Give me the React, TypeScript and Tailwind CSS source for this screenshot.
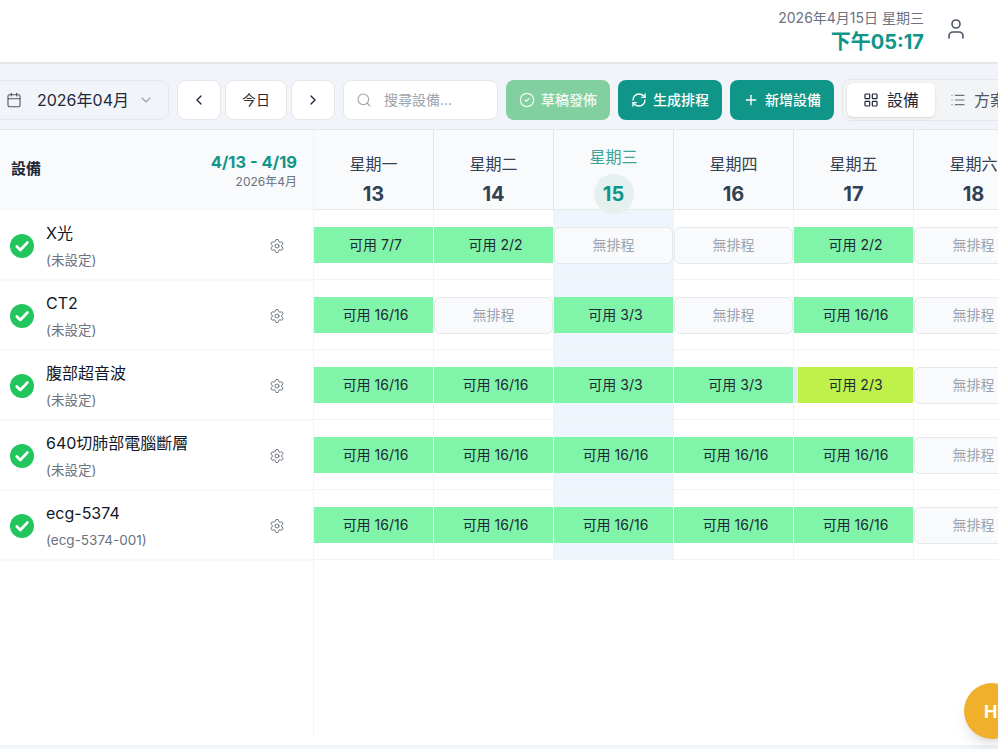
import { Calendar, ChevronDown, ChevronLeft, ChevronRight, CircleCheck, LayoutGrid, List, Plus, RefreshCw, Search, Settings, User } from "lucide-react";

type Cell = { label?: string; warn?: boolean };

const days = [
  { name: "星期一", num: 13 },
  { name: "星期二", num: 14 },
  { name: "星期三", num: 15, today: true },
  { name: "星期四", num: 16 },
  { name: "星期五", num: 17 },
  { name: "星期六", num: 18 },
  { name: "星期日", num: 19 },
];

const rows: { name: string; code: string; cells: Cell[] }[] = [
  {
    name: "X光",
    code: "(未設定)",
    cells: [{ label: "可用 7/7" }, { label: "可用 2/2" }, {}, {}, { label: "可用 2/2" }, {}, {}],
  },
  {
    name: "CT2",
    code: "(未設定)",
    cells: [{ label: "可用 16/16" }, {}, { label: "可用 3/3" }, {}, { label: "可用 16/16" }, {}, {}],
  },
  {
    name: "腹部超音波",
    code: "(未設定)",
    cells: [{ label: "可用 16/16" }, { label: "可用 16/16" }, { label: "可用 3/3" }, { label: "可用 3/3" }, { label: "可用 2/3", warn: true }, {}, {}],
  },
  {
    name: "640切肺部電腦斷層",
    code: "(未設定)",
    cells: [{ label: "可用 16/16" }, { label: "可用 16/16" }, { label: "可用 16/16" }, { label: "可用 16/16" }, { label: "可用 16/16" }, {}, {}],
  },
  {
    name: "ecg-5374",
    code: "(ecg-5374-001)",
    cells: [{ label: "可用 16/16" }, { label: "可用 16/16" }, { label: "可用 16/16" }, { label: "可用 16/16" }, { label: "可用 16/16" }, {}, {}],
  },
];

const StatusIcon = () => (
  <svg viewBox="0 0 24 24" className="w-6 h-6 shrink-0">
    <circle cx="12" cy="12" r="12" fill="#22c55e" />
    <path d="M6.8 12.5l3.5 3.5 7-7.4" fill="none" stroke="#fff" strokeWidth="2.8" strokeLinecap="round" strokeLinejoin="round" />
  </svg>
);

const ScheduleCell = ({ cell }: { cell: Cell }) => {
  if (!cell.label) {
    return (
      <div className="h-[37px] pb-0.5 rounded-md border border-[#e5e7eb] bg-[#f9fafb] flex items-center justify-center text-[14px] text-[#9ca3af]">
        無排程
      </div>
    );
  }
  if (cell.warn) {
    return (
      <div className="h-9 pb-0.5 border-l-4 border-[#e2e8f4] bg-[#bef24b] flex items-center justify-center text-[14px] text-[#1f2937]">
        {cell.label}
      </div>
    );
  }
  return (
    <div className="h-9 pb-0.5 pl-1 bg-[#80f4a8] flex items-center justify-center text-[14px] text-[#1f2937]">
      {cell.label}
    </div>
  );
};

const App = () => {
  return (
    <div className="relative w-[998px] h-[749px] overflow-hidden bg-white font-['Inter','Noto_Sans_CJK_TC',sans-serif]">
      {/* Top bar */}
      <header className="h-16 bg-white border-b-2 border-[#e5e7eb] flex items-center justify-end pr-[30px]">
        <div className="text-right mr-[20px] mt-px">
          <div className="text-[14px] leading-5 text-[#6b7280]">2026年4月15日 星期三</div>
          <div className="text-[20px] leading-7 font-bold text-[#0f9688]">下午05:17</div>
        </div>
        <User className="w-6 h-6 text-[#4b5563] -mt-1" strokeWidth={1.6} />
      </header>

      {/* Toolbar */}
      <div className="h-[66px] bg-[#f1f5f9] border-b border-[#e5e7eb] flex items-center gap-2 -ml-[30px] pt-1.5">
        <div className="w-[199px] h-10 shrink-0 rounded-lg border border-[#e5e7eb] bg-[#f1f5f9] flex items-center pl-[35px] text-[#374151]">
          <Calendar className="w-4 h-4 text-[#4b5563]" strokeWidth={1.6} />
          <span className="ml-[15px] text-[16px] text-[#1f2937]">2026年04月</span>
          <ChevronDown className="ml-[9px] w-4 h-4 text-[#9ca3af]" strokeWidth={1.8} />
        </div>
        <div className="w-11 h-10 shrink-0 rounded-lg border border-[#e5e7eb] bg-white flex items-center justify-center">
          <ChevronLeft className="w-4 h-4 text-[#1f2937]" strokeWidth={2} />
        </div>
        <div className="w-[62px] h-10 shrink-0 -ml-1 rounded-lg border border-[#e5e7eb] bg-white flex items-center justify-center text-[14px] text-[#1f2937]">
          今日
        </div>
        <div className="w-11 h-10 shrink-0 -ml-1 rounded-lg border border-[#e5e7eb] bg-white flex items-center justify-center">
          <ChevronRight className="w-4 h-4 text-[#1f2937]" strokeWidth={2} />
        </div>
        <div className="w-[155px] h-10 shrink-0 rounded-lg border border-[#e5e7eb] bg-white flex items-center pl-3 text-[14px] text-[#9ca3af]">
          <Search className="w-4 h-4" strokeWidth={1.6} />
          <span className="ml-3">搜尋設備...</span>
        </div>
        <button className="w-[104px] h-10 shrink-0 rounded-lg bg-[#82cf9f] flex items-center justify-center gap-1.5 text-[14px] font-medium text-white/90">
          <CircleCheck className="w-4 h-4" strokeWidth={1.8} />
          草稿發佈
        </button>
        <button className="w-[104px] h-10 shrink-0 rounded-lg bg-[#0f9688] flex items-center justify-center gap-1.5 text-[14px] font-medium text-white">
          <RefreshCw className="w-4 h-4" strokeWidth={2} />
          生成排程
        </button>
        <button className="w-[104px] h-10 shrink-0 rounded-lg bg-[#0f9688] flex items-center justify-center gap-1.5 text-[14px] font-medium text-white">
          <Plus className="w-4 h-4" strokeWidth={2} />
          新增設備
        </button>
        <div className="h-[42px] shrink-0 rounded-lg border border-[#e5e7eb] bg-[#f3f4f6] flex items-center p-1">
          <div className="w-[88px] h-[34px] rounded-md bg-white shadow-sm flex items-center justify-center gap-2 text-[16px] text-[#1f2937]">
            <LayoutGrid className="w-4 h-4" strokeWidth={1.8} />
            設備
          </div>
          <div className="w-[86px] h-[34px] flex items-center justify-center gap-2 text-[16px] text-[#4b5563]">
            <List className="w-4 h-4 text-[#6b7280]" strokeWidth={1.8} />
            方案
          </div>
        </div>
      </div>

      {/* Schedule table */}
      <div className="flex h-[605px]">
        <div className="w-[314px] shrink-0 border-r border-[#f1f3f5]">
          <div className="h-[81px] bg-[#f9fafb] flex items-center justify-between pl-[11px] pr-4">
            <span className="text-[15px] -mt-0.5 font-bold text-[#1f2937]">設備</span>
            <div className="text-right -mt-0.5">
              <div className="text-[16.5px] leading-6 font-bold text-[#0f9688]">4/13 - 4/19</div>
              <div className="text-[12px] leading-4 text-[#6b7280]">2026年4月</div>
            </div>
          </div>
          {rows.map((row) => (
            <div key={row.name} className="h-[70px] pt-0.5 border-b-2 border-[#f7f8f9] flex items-center pl-[10px] pr-[28px]">
              <StatusIcon />
              <div className="ml-3 -mt-0.5 flex-1 min-w-0">
                <div className="text-[16px] leading-6 text-[#111827]">{row.name}</div>
                <div className="mt-1.5 text-[13.5px] leading-[18px] text-[#6b7280]">{row.code}</div>
              </div>
              <Settings className="w-4 h-4 text-[#6b7280]" strokeWidth={1.5} />
            </div>
          ))}
        </div>

        <div className="flex-1 min-w-0 flex overflow-hidden">
          {days.map((day, i) => (
            <div key={day.num} className="w-[120px] shrink-0">
              <div className="h-20 bg-[#f9fafb] border-r border-b border-[#e5e7eb] flex flex-col items-center">
                <span className={`text-[16px] leading-6 ${day.today ? "mt-[15px] text-[#3aa596]" : "mt-[22px] text-[#374151]"}`}>
                  {day.name}
                </span>
                {day.today ? (
                  <span className="relative shrink-0 mt-[5px] w-10 h-10 rounded-full bg-[#e6f0ee] flex items-center justify-center text-[20px] font-bold text-[#0f9688]">
                    {day.num}
                  </span>
                ) : (
                  <span className="mt-1 text-[20px] leading-7 font-bold text-[#334155]">{day.num}</span>
                )}
              </div>
              <div className={day.today ? "bg-[#eff5fd]" : "bg-white"}>
                {rows.map((row) => (
                  <div key={row.name} className="h-[70px] border-r border-b border-[#f1f3f5] pt-[17px]">
                    <ScheduleCell cell={row.cells[i]} />
                  </div>
                ))}
              </div>
            </div>
          ))}
        </div>
      </div>

      <div className="h-2.5 bg-white" />
      <div className="h-1 bg-[#f1f5f9]" />

      {/* Floating help button */}
      <div className="absolute left-[964px] top-[683px] w-14 h-14 rounded-full bg-[#f0b02c] shadow-lg flex items-center pl-[20px] text-[18px] font-bold text-white">
        Hi
      </div>
    </div>
  );
};

export default App;
